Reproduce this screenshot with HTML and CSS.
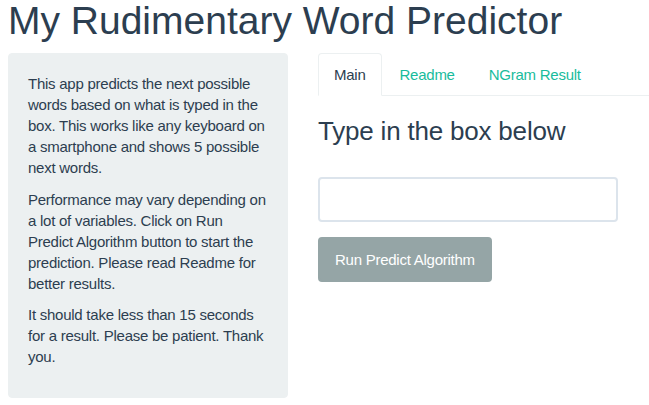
FILE: index.html
```html
<!DOCTYPE html>
<html>
<head>
<meta charset="utf-8">
<link rel="stylesheet" href="styles.css">
</head>
<body>
<div class="page">
  <h1 class="title">My Rudimentary Word Predictor</h1>
  <div class="row">
    <div class="well">
      <p>This app predicts the next possible words based on what is typed in the box. This works like any keyboard on a smartphone and shows 5 possible next words.</p>
      <p>Performance may vary depending on a lot of variables. Click on Run Predict Algorithm button to start the prediction. Please read Readme for better results.</p>
      <p>It should take less than 15 seconds for a result. Please be patient. Thank you.</p>
    </div>
    <div class="main">
      <ul class="tabs">
        <li class="tab active"><a>Main</a></li>
        <li class="tab"><a>Readme</a></li>
        <li class="tab"><a>NGram Result</a></li>
      </ul>
      <div class="pane">
        <h3 class="subtitle">Type in the box below</h3>
        <div class="form-group">
          <input class="form-control" type="text">
        </div>
        <button class="btn">Run Predict Algorithm</button>
      </div>
    </div>
  </div>
</div>
</body>
</html>
```

FILE: styles.css
```css
* { box-sizing: border-box; }
html, body {
  margin: 0;
  padding: 0;
  background: #fff;
}
body {
  font-family: "Liberation Sans", Arial, sans-serif;
  font-size: 15px;
  line-height: 21px;
  letter-spacing: -0.25px;
  color: #2c3e50;
  overflow: hidden;
}
.page {
  padding-left: 8px;
}
.title {
  margin: -1px 0 11px 0;
  font-size: 39px;
  font-weight: 400;
  line-height: 43px;
  letter-spacing: 0;
  color: #2c3e50;
}
.row {
  display: flex;
  gap: 30px;
  align-items: flex-start;
}
.well {
  width: 280px;
  flex: none;
  background: #ecf0f1;
  border: 1px solid #ecf0f1;
  border-radius: 4px;
  padding: 19px;
}
.well p {
  margin: 0 0 10.5px 0;
}
.main {
  flex: 1;
}
.tabs {
  list-style: none;
  margin: 0;
  padding: 0;
  display: flex;
  border-bottom: 1px solid #ecf0f1;
}
.tab {
  margin-bottom: -1px;
}
.tab a {
  display: block;
  padding: 10px 15px;
  margin-right: 2px;
  border: 1px solid transparent;
  border-radius: 4px 4px 0 0;
  color: #18bc9c;
  line-height: 21px;
}
.tab.active a {
  color: #2c3e50;
  background: #fff;
  border-color: #ecf0f1;
  border-bottom-color: transparent;
}
.subtitle {
  margin: 21px 0 0 0;
  font-size: 26px;
  font-weight: 400;
  line-height: 28.6px;
  letter-spacing: -0.2px;
}
.form-group {
  margin-top: 31px;
  margin-bottom: 15px;
}
.form-control {
  display: block;
  width: 300px;
  height: 45px;
  padding: 10px 15px;
  border: 2px solid #dce4ec;
  border-radius: 4px;
  font-family: inherit;
  font-size: 15px;
  color: #2c3e50;
  background: #fff;
  outline: none;
}
.btn {
  display: inline-block;
  height: 45px;
  padding: 10px 15px;
  border: 2px solid #95a5a6;
  border-radius: 4px;
  background: #95a5a6;
  color: #fff;
  font-family: inherit;
  font-size: 15px;
  line-height: 21px;
  letter-spacing: -0.25px;
}
```
